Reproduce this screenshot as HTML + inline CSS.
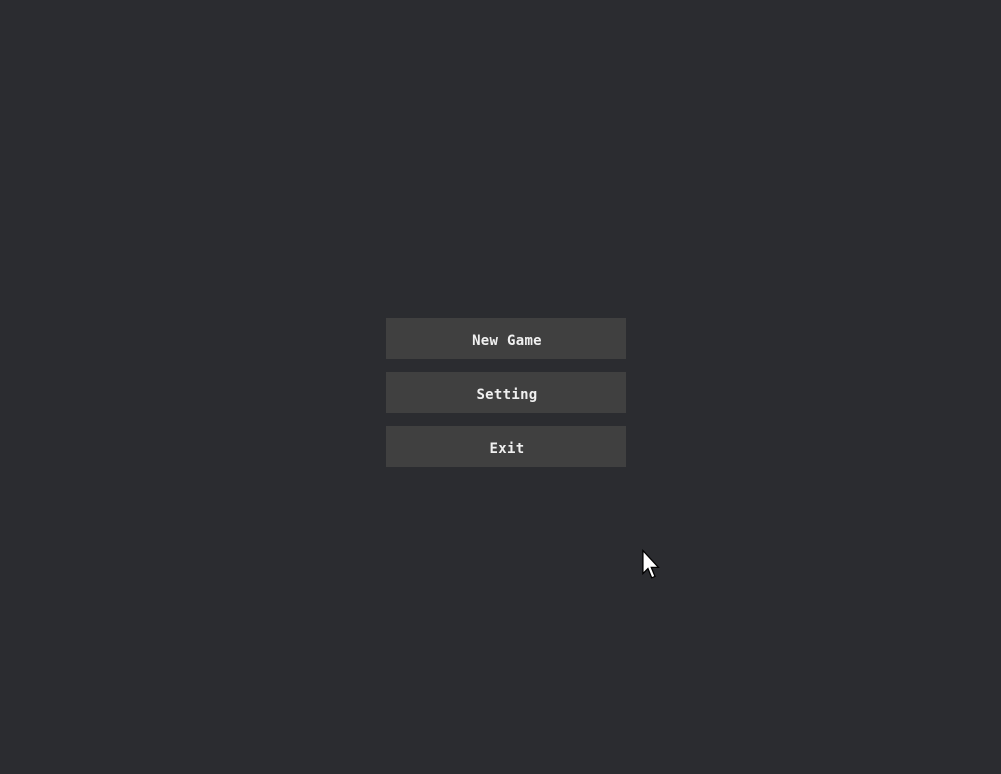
<!DOCTYPE html>
<html><head><style>
html,body{margin:0;padding:0;width:1001px;height:774px;background:#2b2c30;overflow:hidden}
.b{position:absolute;left:386px;width:240px;height:41px;background:#404040;color:#f0f0f0;
font-family:"DejaVu Sans Mono","Liberation Mono",monospace;font-weight:bold;font-size:14px;
line-height:41px;text-align:center;letter-spacing:0.3px;box-sizing:border-box;padding-top:4px;padding-left:2px}
.b span{display:block;line-height:41px;margin-top:-4px}
</style></head><body>
<div class="b" style="top:318px"><span style="position:relative;top:3px">New Game</span></div>
<div class="b" style="top:372px"><span style="position:relative;top:3px">Setting</span></div>
<div class="b" style="top:426px"><span style="position:relative;top:3px">Exit</span></div>
<svg style="position:absolute;left:641px;top:549px" width="22" height="32" viewBox="0 0 20 30">
<path d="M1.5 1.5 L1.5 23 L6.2 18.3 L9.7 27 L12.8 25.7 L9.3 17.2 L16 17.2 Z" fill="#fff" stroke="#000" stroke-width="1.2"/>
</svg>
</body></html>
